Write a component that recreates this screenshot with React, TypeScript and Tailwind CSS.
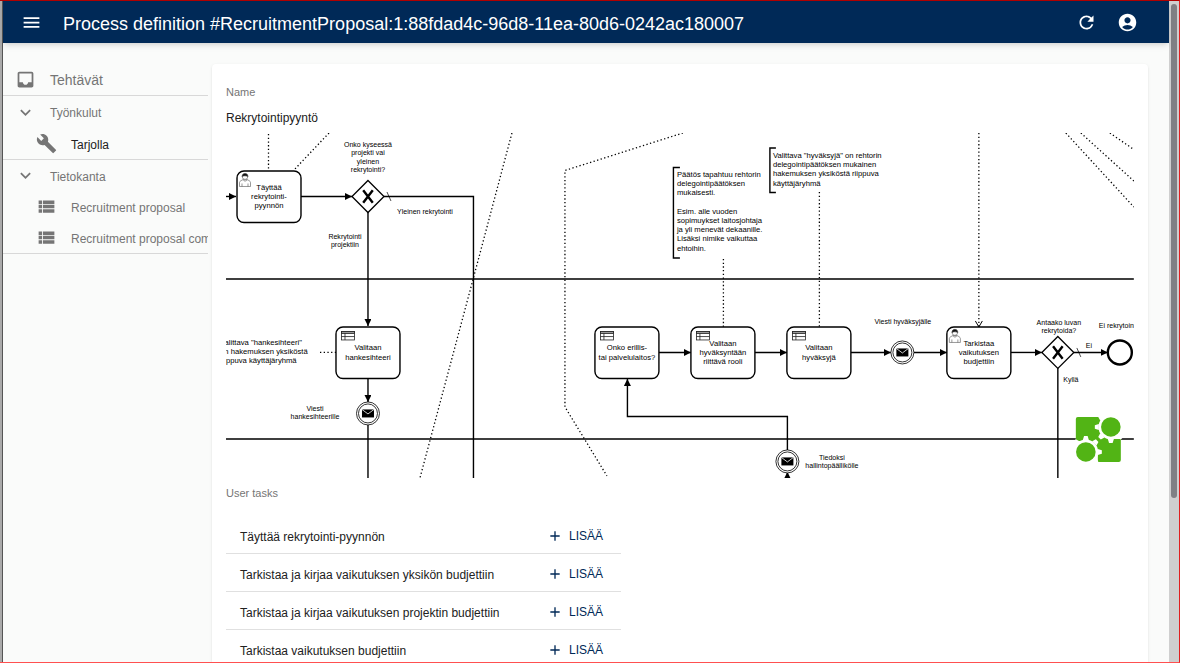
import { MdMenu, MdRefresh, MdAccountCircle, MdInbox, MdExpandMore, MdBuild, MdViewList, MdAdd } from "react-icons/md";

const userTasks = [
  "Täyttää rekrytointi-pyynnön",
  "Tarkistaa ja kirjaa vaikutuksen yksikön budjettiin",
  "Tarkistaa ja kirjaa vaikutuksen projektin budjettiin",
  "Tarkistaa vaikutuksen budjettiin",
];

type DiagramTask = { x: number; y: number; lines: string[]; kind: "user" | "rule" };

const diagramTasks: DiagramTask[] = [
  { x: 237, y: 171, kind: "user", lines: ["Täyttää", "rekrytointi-", "pyynnön"] },
  { x: 336, y: 327, kind: "rule", lines: ["Valitaan", "hankesihteeri"] },
  { x: 595, y: 327, kind: "rule", lines: ["Onko erillis-", "tai palvelulaitos?"] },
  { x: 691, y: 327, kind: "rule", lines: ["Valitaan", "hyväksyntään", "riittävä rooli"] },
  { x: 787, y: 327, kind: "rule", lines: ["Valitaan", "hyväksyjä"] },
  { x: 947, y: 327, kind: "user", lines: ["Tarkistaa", "vaikutuksen", "budjettiin"] },
];

// Diagram units are 1/0.64 of the shape coordinates, which start at (226, 133).
const unit = 1 / 0.64;

type LabelProps = {
  x: number;
  y: number;
  lines: string[];
  size?: number;
  anchor?: "start" | "middle";
};

function Label({ x, y, lines, size = 12, anchor = "middle" }: LabelProps) {
  return (
    <text fontSize={size} textAnchor={anchor} fill="#000">
      {lines.map((line, i) => (
        <tspan key={i} x={(x - 226) * unit} y={(y - 133) * unit + i * size * 1.2}>
          {line}
        </tspan>
      ))}
    </text>
  );
}

function UserMarker({ x, y }: { x: number; y: number }) {
  return (
    <g transform={`translate(${x} ${y})`} stroke="#555" strokeWidth="0.6" fill="#fff">
      <path d="M0.5 13.5V9.5C0.5 8 3 7.2 4.2 6.6L8 6.6C9.3 7.2 11.5 8 11.5 9.5V13.5Z" />
      <path d="M3 13.5V10.5M9 13.5V10.5M4.2 6.6C4.6 8.6 7.6 8.6 8 6.6" fill="none" />
      <circle cx="6" cy="3.6" r="2.8" />
      <path d="M3.2 4C2.8 1.5 4.5 0.4 6 0.4S9.3 1.5 8.8 4C8 2.6 7 3.4 6 2.8C5 3.2 4 2.6 3.2 4Z" fill="#111" />
    </g>
  );
}

function RuleMarker({ x, y }: { x: number; y: number }) {
  return (
    <g transform={`translate(${x} ${y})`} stroke="#222" strokeWidth="0.8" fill="none">
      <rect x="0.5" y="0.5" width="13" height="8.5" fill="#fff" />
      <rect x="0.5" y="0.5" width="13" height="2" fill="#999" />
      <path d="M0.5 5.6H13.5M4 2.5V9" />
    </g>
  );
}

function TaskBox({ x, y, kind }: DiagramTask) {
  return (
    <g>
      <rect x={x} y={y} width="64" height="51.5" rx="7" fill="#fff" stroke="#000" strokeWidth="1.4" />
      {kind === "user" ? <UserMarker x={x + 2} y={y + 2} /> : <RuleMarker x={x + 5} y={y + 4} />}
    </g>
  );
}

function Gateway({ x, y }: { x: number; y: number }) {
  return (
    <g transform={`translate(${x} ${y})`} stroke="#000">
      <path d="M0-16L16 0L0 16L-16 0Z" fill="#fff" strokeWidth="1.3" />
      <path d="M-4.8-6.2L4.8 6.2M4.8-6.2L-4.8 6.2" strokeWidth="2.4" />
    </g>
  );
}

function MessageEvent({ x, y }: { x: number; y: number }) {
  return (
    <g transform={`translate(${x} ${y})`}>
      <circle r="11.5" fill="#fff" stroke="#000" strokeWidth="0.8" />
      <circle r="9.5" fill="none" stroke="#000" strokeWidth="0.8" />
      <rect x="-6" y="-4" width="12" height="8" />
      <path d="M-6-4L0 0.5L6-4" fill="none" stroke="#fff" strokeWidth="0.8" />
    </g>
  );
}

function GearCutout({ x, y }: { x: number; y: number }) {
  return (
    <g transform={`translate(${x} ${y})`}>
      <circle r="12.4" fill="#fff" />
      {[0, 45, 90, 135, 180, 225, 270, 315].map((angle) => (
        <path key={angle} d="M-3-12L-1.8-16H1.8L3-12Z" fill="#fff" transform={`rotate(${angle})`} />
      ))}
      <circle r="9.8" fill="#52b415" />
    </g>
  );
}

function Logo() {
  return (
    <g transform="translate(1076 417)">
      <rect width="45" height="45" fill="#fff" />
      <path d="M2 0H25V10H35V22H45V43Q45 45 43 45H22V35H10V24H0V2Q0 0 2 0Z" fill="#52b415" />
      <GearCutout x={35} y={10} />
      <GearCutout x={10} y={35} />
    </g>
  );
}

function ProcessDiagram() {
  return (
    <svg viewBox="0 0 1419 539" className="block w-full" role="img" aria-label="Rekrytointipyyntö" fontFamily="'Liberation Sans', Arial, sans-serif">
      <defs>
        <marker id="arrow" viewBox="0 0 7 7" refX="7" refY="3.5" markerWidth="7" markerHeight="7" markerUnits="userSpaceOnUse" orient="auto">
          <path d="M0 0L7 3.5L0 7Z" />
        </marker>
        <marker id="open-arrow" viewBox="0 0 8 8" refX="7" refY="4" markerWidth="8" markerHeight="8" markerUnits="userSpaceOnUse" orient="auto">
          <path d="M1 0.5L7 4L1 7.5" fill="none" stroke="#000" />
        </marker>
      </defs>
      <g transform="scale(1.5625) translate(-226 -133)">
        <g fill="none" stroke="#000" strokeWidth="1.4">
          <path d="M226 279H1134M226 439H1134" strokeWidth="1.6" />
          <path d="M226 196.5H236" markerEnd="url(#arrow)" />
          <path d="M301 196.5H352" markerEnd="url(#arrow)" />
          <path d="M384 196.5H473.5V478" />
          <path d="M368 212V326" markerEnd="url(#arrow)" />
          <path d="M368 378V402" markerEnd="url(#arrow)" />
          <path d="M368 425V478" />
          <path d="M659 352.5H691" markerEnd="url(#arrow)" />
          <path d="M755 352.5H787" markerEnd="url(#arrow)" />
          <path d="M851 352.5H891" markerEnd="url(#arrow)" />
          <path d="M914 352.5H947" markerEnd="url(#arrow)" />
          <path d="M1011 352.5H1042" markerEnd="url(#arrow)" />
          <path d="M1074 352.5H1108" markerEnd="url(#arrow)" />
          <path d="M1058 368V478" />
          <path d="M787.5 450V416.5H627.5V379" markerEnd="url(#arrow)" />
          <path d="M787.5 485V472" markerEnd="url(#arrow)" />
          <path d="M387 192L391 201M1077 348L1081 357" strokeWidth="0.7" />
          <path d="M680 167.5H673.5V258H680M776 148H770V192.5H776" />
        </g>
        <g fill="none" stroke="#000" strokeWidth="1.3" strokeDasharray="1.3 2.4">
          <path d="M268.5 134V170M329 133L294 170M512 133L474 276L420 478" />
          <path d="M320 352.5H336" />
          <path d="M683 133L565 170.5V407L607 476" />
          <path d="M723.5 259V327M819.5 192V327" />
          <path d="M979 133V327" markerEnd="url(#open-arrow)" />
          <path d="M1066 133L1134 207M1081 133L1134 181M1110 133L1134 149.5" />
        </g>
        {diagramTasks.map((task) => (
          <TaskBox key={`${task.x}-${task.y}`} {...task} />
        ))}
        <Gateway x={368} y={196.5} />
        <Gateway x={1058} y={352.5} />
        <MessageEvent x={368} y={413.5} />
        <MessageEvent x={902.5} y={352.5} />
        <MessageEvent x={787.5} y={461.5} />
        <circle cx="1120" cy="352.5" r="12" fill="#fff" stroke="#000" strokeWidth="2.4" />
        <Logo />
      </g>
      {diagramTasks.map((task) => (
        <Label key={`${task.x}-${task.y}`} x={task.x + 32} y={task.y + 28 - (task.lines.length - 1) * 4.5} lines={task.lines} />
      ))}
      <Label x={368} y={147} size={11} lines={["Onko kyseessä", "projekti vai", "yleinen", "rekrytointi?"]} />
      <Label x={425} y={214} size={11} lines={["Yleinen rekrytointi"]} />
      <Label x={345} y={239} size={11} lines={["Rekrytointi", "projektiin"]} />
      <Label x={315} y={411} size={11} lines={["Viesti", "hankesihteerille"]} />
      <Label x={903} y={324} size={11} lines={["Viesti hyväksyjälle"]} />
      <Label x={1059} y={325} size={11} lines={["Antaako luvan", "rekrytoida?"]} />
      <Label x={1099} y={328} size={11} anchor="start" lines={["Ei rekrytointia"]} />
      <Label x={1089} y={348} size={11} lines={["Ei"]} />
      <Label x={1071} y={382} size={11} lines={["Kyllä"]} />
      <Label x={832} y={460} size={11} lines={["Tiedoksi", "hallintopäällikölle"]} />
      <Label x={220} y={345} anchor="start" lines={["Valittava \"hankesihteeri\"", "on hakemuksen yksiköstä", "riippuva käyttäjäryhmä"]} />
      <Label
        x={677}
        y={177}
        anchor="start"
        lines={["Päätös tapahtuu rehtorin", "delegointipäätöksen", "mukaisesti.", "", "Esim. alle vuoden", "sopimuykset laitosjohtaja", "ja yli menevät dekaanille.", "Lisäksi nimike vaikuttaa", "ehtoihin."]}
      />
      <Label
        x={773}
        y={158}
        anchor="start"
        lines={["Valittava \"hyväksyjä\" on rehtorin", "delegointipäätöksen mukainen", "hakemuksen yksiköstä riippuva", "käyttäjäryhmä"]}
      />
    </svg>
  );
}

export default function App() {
  return (
    <div className="flex h-screen overflow-hidden border-t border-r border-b border-t-[#b00000] border-r-[#e02020] border-b-[#ff5050] bg-[#fafbfa] font-['Liberation_Sans',Arial,sans-serif] text-[#212121]">
      <div className="w-[3px] shrink-0 border-r border-[#555] bg-[#aaa]" />
      <div className="flex min-w-0 flex-1 flex-col">
        <header className="z-10 flex h-[42px] shrink-0 items-center bg-[#002957] pr-[31px] pl-[18px] text-white shadow-md">
          <button aria-label="Menu" className="mr-[21px]">
            <MdMenu size={21} />
          </button>
          <h1 className="flex-1 truncate pt-1 text-lg">Process definition #RecruitmentProposal:1:88fdad4c-96d8-11ea-80d6-0242ac180007</h1>
          <button aria-label="Refresh" className="mr-5">
            <MdRefresh size={21} />
          </button>
          <button aria-label="Account">
            <MdAccountCircle size={21} />
          </button>
        </header>
        <div className="flex min-h-0 flex-1">
          <nav className="w-[205px] shrink-0 pt-[21px] text-xs text-[#757575]">
            <a href="#tasks" className="flex h-8 items-center border-b border-[#d8d8d8] pl-3 text-sm">
              <MdInbox size={21} className="mr-3.5" />
              Tehtävät
            </a>
            <div className="border-b border-[#d8d8d8]">
              <button className="flex h-8 w-full items-center pl-3">
                <MdExpandMore size={21} className="mr-3.5" />
                <span className="pt-0.5">Työnkulut</span>
              </button>
              <a href="#available" className="flex h-[31px] items-center pl-[33px] text-[#212121]">
                <MdBuild size={21} className="mr-3.5 text-[#757575]" />
                <span className="pt-0.5">Tarjolla</span>
              </a>
            </div>
            <div className="overflow-hidden border-b border-[#d8d8d8]">
              <button className="flex h-[31px] w-full items-center pl-3">
                <MdExpandMore size={21} className="mr-3.5" />
                <span className="pt-0.5">Tietokanta</span>
              </button>
              <a href="#proposal" className="flex h-[31px] items-center pl-[33px] whitespace-nowrap">
                <MdViewList size={21} className="mr-3.5 shrink-0" />
                <span className="pt-0.5">Recruitment proposal</span>
              </a>
              <a href="#comments" className="flex h-[31px] items-center pl-[33px] whitespace-nowrap">
                <MdViewList size={21} className="mr-3.5 shrink-0" />
                <span className="pt-0.5">Recruitment proposal comments</span>
              </a>
            </div>
          </nav>
          <main className="mt-[21px] mr-[21px] ml-1 min-w-0 flex-1 rounded-t-sm bg-white px-3.5 pt-5 shadow">
            <p className="text-[11px] leading-4 text-[#757575]">Name</p>
            <p className="mt-2 mb-[5px] text-xs leading-5">Rekrytointipyyntö</p>
            <ProcessDiagram />
            <h2 className="mt-[7px] text-[11px] leading-4 text-[#757575]">User tasks</h2>
            <table className="mt-[15px] w-[395px] text-xs">
              <tbody>
                {userTasks.map((task) => (
                  <tr key={task} className="h-[38px] border-b border-[#e0e0e0]">
                    <td className="pt-1 pl-3.5">{task}</td>
                    <td className="pt-0.5 pr-[18px]">
                      <button className="ml-auto flex items-center gap-1.5 text-xs text-[#002957]">
                        <MdAdd size={16} />
                        LISÄÄ
                      </button>
                    </td>
                  </tr>
                ))}
              </tbody>
            </table>
          </main>
        </div>
      </div>
      <div className="w-[10px] shrink-0 bg-[#cfcfcf] px-[2px] pt-[3px]">
        <div className="h-3/4 rounded-full bg-[#808084]" />
      </div>
    </div>
  );
}
